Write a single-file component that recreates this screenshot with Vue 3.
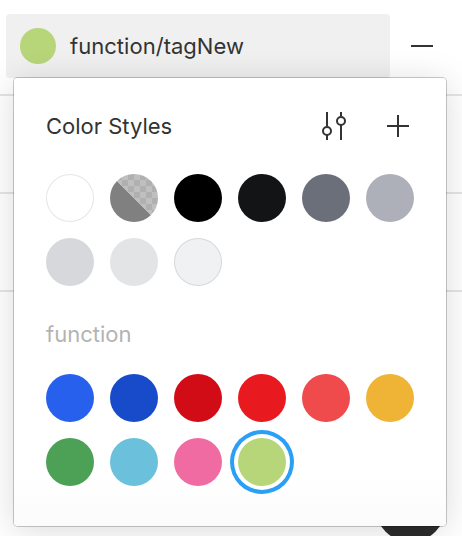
<script setup>
const neutrals = [
  { color: '#ffffff', outlined: true },
  { color: '#808080', translucent: true },
  { color: '#000000' },
  { color: '#121416' },
  { color: '#6b6f7a' },
  { color: '#adb0b9' },
  { color: '#d6d8dc' },
  { color: '#e3e4e6' },
  { color: '#f0f1f3', outlined: true },
]
const functional = [
  { color: '#2660ed' },
  { color: '#184bc9' },
  { color: '#d20c16' },
  { color: '#e81a20' },
  { color: '#ef4a4c' },
  { color: '#efb436' },
  { color: '#4ca157' },
  { color: '#6bc1db' },
  { color: '#f16ba3' },
  { color: '#b7d67a', selected: true },
]
</script>

<template>
  <div class="panel">
    <div class="style-row">
      <div class="style-field">
        <span class="dot"></span>
        <span class="label style-name">function/tagNew</span>
      </div>
      <svg class="minus" width="24" height="24" viewBox="0 0 24 24">
        <path d="M1 12H23" />
      </svg>
    </div>
    <div class="section"></div>
    <div class="section"></div>
    <div class="section last"></div>
    <div class="help"></div>

    <div class="popover">
      <header class="head">
        <span class="label title">Color Styles</span>
        <svg class="sliders" width="26" height="30" viewBox="0 0 26 30">
          <path d="M6 1V15M6 24V29M20 1V5M20 14V29" />
          <circle cx="6" cy="20" r="4" />
          <circle cx="20" cy="10" r="4" />
        </svg>
        <svg class="plus" width="24" height="24" viewBox="0 0 24 24">
          <path d="M1 12H23M12 1V23" />
        </svg>
      </header>
      <div class="swatches">
        <span
          v-for="s in neutrals"
          :key="s.color"
          class="swatch"
          :class="{ outlined: s.outlined, translucent: s.translucent }"
          :style="{ backgroundColor: s.color }"
        ></span>
      </div>
      <div class="label group">function</div>
      <div class="swatches">
        <span
          v-for="s in functional"
          :key="s.color"
          class="swatch"
          :class="{ selected: s.selected }"
          :style="{ backgroundColor: s.color }"
        ></span>
      </div>
    </div>
  </div>
</template>

<style>
body {
  background: #fff;
}
</style>

<style scoped>
.panel {
  position: relative;
  box-sizing: border-box;
  width: 462px;
  height: 536px;
  overflow: hidden;
  padding-top: 14px;
  background: #fff;
  font-family: Inter, "Liberation Sans", sans-serif;
  font-size: 22px;
  color: #333;
}
.label {
  line-height: 32px;
  white-space: nowrap;
}
.style-name {
  letter-spacing: 0.03px;
}
.style-row {
  display: flex;
  align-items: center;
  height: 64px;
  padding-left: 6px;
  margin-bottom: 16px;
}
.style-field {
  display: flex;
  align-items: center;
  gap: 14px;
  box-sizing: border-box;
  width: 384px;
  height: 64px;
  padding-left: 14px;
  border-radius: 4px;
  background: #f0f0f0;
}
.dot {
  width: 36px;
  height: 36px;
  border-radius: 50%;
  background: #b7d67a;
}
svg {
  fill: none;
  stroke: #333;
  stroke-width: 2;
}
.minus {
  margin-left: 20px;
}
.section {
  box-sizing: border-box;
  height: 98px;
  border-top: 2px solid #e5e5e5;
}
.section.last {
  height: 246px;
}
.help {
  position: absolute;
  left: 375px;
  top: 471px;
  width: 71px;
  height: 71px;
  border-radius: 50%;
  background: #2c2c2c;
}
.popover {
  position: absolute;
  left: 14px;
  top: 78px;
  box-sizing: border-box;
  width: 432px;
  height: 448px;
  padding: 32px;
  border-radius: 4px;
  background: linear-gradient(#fff 400px, #fbfbfb);
  box-shadow: 0 0 0 1px rgba(0, 0, 0, 0.2), 0 4px 34px rgba(0, 0, 0, 0.15);
}
.head {
  display: flex;
  align-items: center;
  height: 32px;
  margin-bottom: 32px;
}
.sliders {
  margin-left: auto;
}
.plus {
  margin: 0 4px 0 39px;
}
.swatches {
  display: grid;
  grid-template-columns: repeat(6, 48px);
  gap: 16px;
}
.swatch {
  height: 48px;
  border-radius: 50%;
}
.outlined {
  box-shadow: inset 0 0 0 1px rgba(0, 0, 0, 0.1);
}
.translucent {
  background-image:
    linear-gradient(45deg, #808080 50%, transparent 50%),
    conic-gradient(#b0b0b0 25%, #bfbfbf 0 50%, #b0b0b0 0 75%, #bfbfbf 0);
  background-size: 48px 48px, 12px 12px;
}
.selected {
  box-shadow: 0 0 0 4px #fff, 0 0 0 8px #299ff5;
}
.group {
  margin: 32px 0 24px;
  color: #b3b3b3;
}
</style>
